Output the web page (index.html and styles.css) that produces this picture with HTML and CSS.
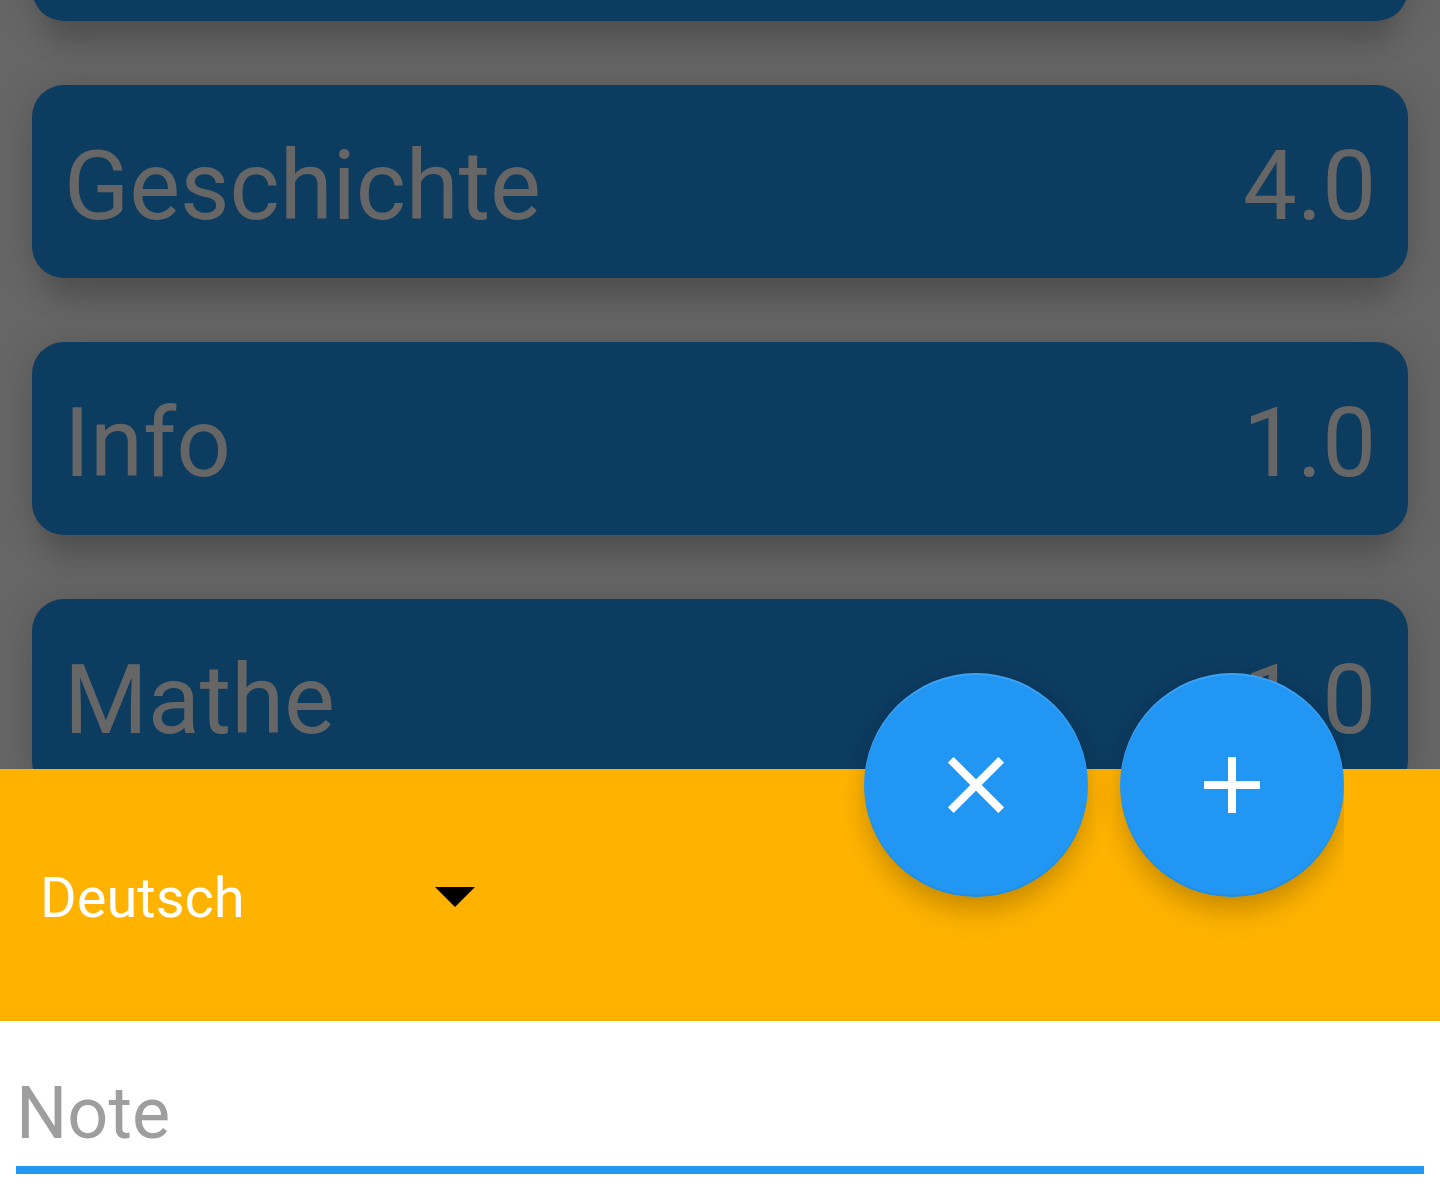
FILE: index.html
```html
<!DOCTYPE html>
<html lang="de">
<head>
<meta charset="utf-8">
<title>Noten</title>
<link rel="stylesheet" href="styles.css">
</head>
<body>
<div class="screen">
  <main class="subjects">
    <div class="card"></div>
    <div class="card"><span>Geschichte</span><span>4.0</span></div>
    <div class="card"><span>Info</span><span>1.0</span></div>
    <div class="card"><span>Mathe</span><span>1.0</span></div>
  </main>
  <section class="sheet">
    <div class="toolbar">
      <div class="spinner">
        <span class="selected">Deutsch</span>
        <svg class="caret" width="40" height="20" viewBox="0 0 40 20"><path d="M0 0h40L20 20z"/></svg>
      </div>
      <div class="fabs">
        <button class="fab" aria-label="Abbrechen">
          <svg width="56" height="56" viewBox="0 0 56 56"><path d="M2.8 2.8l50.4 50.4M53.2 2.8L2.8 53.2"/></svg>
        </button>
        <button class="fab" aria-label="Hinzufügen">
          <svg width="56" height="56" viewBox="0 0 56 56"><path d="M28 0v56M0 28h56"/></svg>
        </button>
      </div>
    </div>
    <div class="field">Note</div>
  </section>
</div>
</body>
</html>
```
FILE: styles.css
```css
* { box-sizing: border-box; }

body {
  margin: 0;
  font-family: Roboto, sans-serif;
  background: #666;
}

.screen {
  display: flex;
  flex-direction: column;
  width: 1440px;
  height: 1184px;
  overflow: hidden;
}

.subjects {
  display: flex;
  flex-direction: column;
  gap: 64px;
  height: 769px;
  padding: 0 32px;
  overflow: hidden;
}

.card {
  display: flex;
  flex: none;
  justify-content: space-between;
  height: 193px;
  padding: 37px 32px 0;
  border-radius: 32px;
  background: #0d3c61;
  box-shadow: 0 38px 24px -14px rgba(0, 0, 0, .13), 0 4px 40px rgba(0, 0, 0, .17);
  color: #666;
  font-size: 96px;
  line-height: 129px;
  letter-spacing: -.1px;
}

.card:first-child { margin-top: -172px; }

.sheet {
  flex: 1;
  background: #fff;
}

.toolbar {
  position: relative;
  height: 252px;
  padding: 96px 40px 0;
  background: #ffb300;
}

.spinner {
  display: flex;
  align-items: center;
  justify-content: space-between;
  width: 435px;
  height: 64px;
  color: #fff;
  font-size: 56px;
  line-height: 64px;
}

.selected { padding-top: 2px; }

.caret { fill: #000; }

.fabs {
  position: absolute;
  top: -96px;
  right: 96px;
  display: flex;
  gap: 32px;
  clip-path: inset(-60px 0 -80px -60px);
}

.fab {
  display: flex;
  align-items: center;
  justify-content: center;
  width: 224px;
  height: 224px;
  padding: 0;
  border: 0;
  border-radius: 50%;
  background: #2196f3;
  box-shadow: 0 20px 30px -6px rgba(0, 0, 0, .17), 0 4px 28px rgba(0, 0, 0, .1),
    inset 0 2px 1px rgba(255, 255, 255, .13), inset 0 -2px 1px rgba(0, 0, 0, .06);
}

.fab path {
  fill: none;
  stroke: #fff;
  stroke-width: 8;
}

.field {
  height: 153px;
  margin: 0 16px;
  padding-top: 51px;
  border-bottom: 8px solid #2196f3;
  color: #9e9e9e;
  font-size: 72px;
  line-height: 84px;
}
```
